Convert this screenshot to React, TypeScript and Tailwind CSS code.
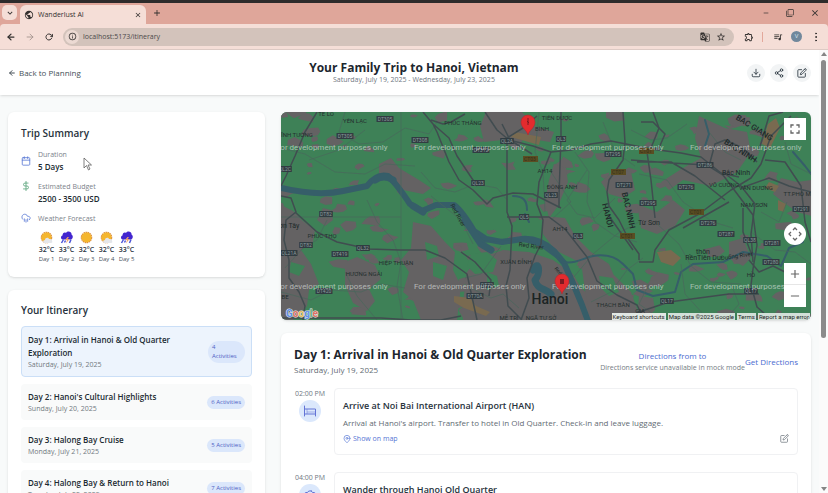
import React, { useState } from 'react';
import {
  FiArrowLeft,
  FiArrowRight,
  FiCalendar,
  FiDollarSign,
  FiDownload,
  FiEdit,
  FiMapPin,
  FiMoreVertical,
  FiRotateCw,
  FiShare2,
} from 'react-icons/fi';
import { LuCamera, LuCloudRain } from 'react-icons/lu';
import {
  MdAdd,
  MdClose,
  MdExpandMore,
  MdFilterNone,
  MdFullscreen,
  MdGTranslate,
  MdInfoOutline,
  MdOutlineExtension,
  MdOutlineQueueMusic,
  MdPublic,
  MdRemove,
  MdStarBorder,
} from 'react-icons/md';

type Weather = 'partly' | 'storm' | 'sunny';

interface Forecast {
  weather: Weather;
  temp: string;
  day: string;
}

interface DayPlan {
  title: string;
  date: string;
  count: number;
}

interface Label {
  x: number;
  y: number;
  text: string;
}

const forecast: Forecast[] = [
  { weather: 'partly', temp: '32°C', day: 'Day 1' },
  { weather: 'storm', temp: '33°C', day: 'Day 2' },
  { weather: 'sunny', temp: '32°C', day: 'Day 3' },
  { weather: 'partly', temp: '32°C', day: 'Day 4' },
  { weather: 'storm', temp: '33°C', day: 'Day 5' },
];

const days: DayPlan[] = [
  { title: 'Day 1: Arrival in Hanoi & Old Quarter Exploration', date: 'Saturday, July 19, 2025', count: 4 },
  { title: "Day 2: Hanoi's Cultural Highlights", date: 'Sunday, July 20, 2025', count: 6 },
  { title: 'Day 3: Halong Bay Cruise', date: 'Monday, July 21, 2025', count: 5 },
  { title: 'Day 4: Halong Bay & Return to Hanoi', date: 'Tuesday, July 22, 2025', count: 7 },
];

const roadShields: Label[] = [
  { x: 104, y: 7, text: 'DT305' },
  { x: 64, y: 24, text: 'DT305' },
  { x: 139, y: 28, text: 'DT308' },
  { x: 4, y: 57, text: 'QL2C' },
  { x: 45, y: 102, text: 'DT82' },
  { x: 25, y: 133, text: 'DT82' },
  { x: 82, y: 136, text: 'QL32' },
  { x: 59, y: 142, text: 'DT419' },
  { x: 8, y: 141, text: 'QL21A' },
  { x: 43, y: 179, text: 'DT420' },
  { x: 226, y: 29, text: 'QL2A' },
  { x: 280, y: 27, text: 'QL3' },
  { x: 200, y: 38, text: 'DT312' },
  { x: 332, y: 42, text: 'DT295' },
  { x: 197, y: 71, text: 'QL23' },
  { x: 270, y: 83, text: 'QL23' },
  { x: 343, y: 73, text: 'DT271' },
  { x: 243, y: 105, text: 'QL5' },
  { x: 297, y: 124, text: 'QL3' },
  { x: 206, y: 173, text: 'DT72' },
  { x: 194, y: 184, text: 'DT70A' },
  { x: 424, y: 53, text: 'DT286' },
  { x: 405, y: 75, text: 'DT276' },
  { x: 367, y: 91, text: 'DT295' },
  { x: 427, y: 111, text: 'DT276' },
  { x: 445, y: 122, text: 'DT287' },
  { x: 469, y: 128, text: 'QL38' },
  { x: 491, y: 131, text: 'DT281' },
  { x: 490, y: 150, text: 'DT280' },
  { x: 520, y: 97, text: 'DT291' },
  { x: 386, y: 189, text: 'QL17' },
  { x: 470, y: 179, text: 'QL17' },
];

const tollShields: Label[] = [
  { x: 249, y: 47, text: 'CT03' },
  { x: 337, y: 60, text: 'CT07' },
  { x: 346, y: 124, text: 'CT01' },
  { x: 365, y: 39, text: 'CT01' },
  { x: 415, y: 100, text: 'CT01' },
];

const districts: Label[] = [
  { x: 45, y: 4, text: 'TE LO' },
  { x: 74, y: 11, text: 'YÊN LẠC' },
  { x: 14, y: 25, text: 'VĨNH TƯỜNG' },
  { x: 182, y: 13, text: 'PHÚC THẮNG' },
  { x: 276, y: 8, text: 'TIÊN DƯỢC' },
  { x: 261, y: 19, text: 'BÌNH' },
  { x: 264, y: 61, text: 'AH14' },
  { x: 281, y: 77, text: 'ĐÔNG ANH' },
  { x: 279, y: 119, text: 'AH14' },
  { x: 41, y: 126, text: 'PHÚC THỌ' },
  { x: 115, y: 153, text: 'HIỆP THUẬN' },
  { x: 83, y: 164, text: 'HƯƠNG NGẢI' },
  { x: 235, y: 152, text: 'XUÂN ĐỈNH' },
  { x: 332, y: 195, text: 'THẠCH BÀN' },
  { x: 228, y: 208, text: 'MỄ TRÌ' },
  { x: 260, y: 208, text: 'NGÃ TƯ SỞ' },
  { x: 443, y: 75, text: 'VÕ CƯỜNG' },
  { x: 475, y: 78, text: 'VĂN DƯƠNG' },
  { x: 473, y: 95, text: 'NAM SƠN' },
  { x: 519, y: 84, text: 'TT.PHỐ MỚI' },
  { x: 470, y: 165, text: 'HỒ' },
  { x: 359, y: 201, text: 'GIA' },
];

const watermarks: [number, number][] = [
  [-5, 38], [133, 38], [271, 38], [409, 38],
  [-5, 177], [133, 177], [271, 177], [409, 177],
];

// Small built-up patches scattered over the fields, from a fixed seed
function buildPatches(count: number): string[] {
  let seed = 11;
  const next = () => {
    seed = (seed * 16807) % 2147483647;
    return seed / 2147483647;
  };
  return Array.from({ length: count }, () => {
    const cx = next() * 530;
    const cy = next() * 208;
    const r = 2 + next() * 6;
    const corners = Array.from({ length: 7 }, (_, i) => {
      const angle = (i / 7) * Math.PI * 2;
      const radius = r * (0.4 + next() * 0.9);
      return `${(cx + Math.cos(angle) * radius * 1.4).toFixed(1)},${(cy + Math.sin(angle) * radius * 0.8).toFixed(1)}`;
    });
    return corners.join(' ');
  });
}

const patches = buildPatches(170);

const WeatherIcon: React.FC<{ weather: Weather }> = ({ weather }) => {
  if (weather === 'storm') {
    return (
      <svg className="h-[13px] w-[13px]" viewBox="0 0 26 26" aria-hidden="true">
        <path d="M5 17c-4-1-4-7 0-8 0-5 4-7 7-5 3-5 12-3 11 3 4 2 3 9-1 10z" fill="#4326cf" />
        <path d="M7 17l-4 7M22 17l-3 7M11 19l-2 4" stroke="#4c55d8" strokeWidth="3" />
        <path d="M15 12l-5 6h4l-2 7 7-9h-4l3-4z" fill="#f0a56b" />
      </svg>
    );
  }
  return (
    <svg className="h-[13px] w-[13px]" viewBox="0 0 26 26" aria-hidden="true">
      <circle cx="13" cy="13" r="10" fill="none" stroke="#d98a3d" strokeWidth="3" strokeDasharray="3 1" />
      <circle cx="13" cy="13" r="10" fill="#f4b62f" />
      {weather === 'partly' && (
        <path d="M10 24c-5 0-5-6 0-6 0-5 7-6 8-2 5-1 7 2 6 4 2 2 0 4-2 4z" fill="#e4e6ea" />
      )}
    </svg>
  );
};

const BedIcon = () => (
  <svg className="h-3.5 w-3.5" viewBox="0 0 28 28" fill="none" stroke="#6374d6" strokeWidth="2" aria-hidden="true">
    <path d="M3 4v20M3 20h22M25 24V10H3" strokeLinecap="round" strokeLinejoin="round" />
    <path d="M8 10v10M8 16h17" strokeWidth="1" />
  </svg>
);

const MapPin: React.FC<{ x: number; y: number; glyph: React.ReactNode }> = ({ x, y, glyph }) => (
  <g transform={`translate(${x} ${y})`}>
    <path d="M0 0C-1-5-7-7-7-13a7 7 0 0 1 14 0C7-7 1-5 0 0z" fill="#e32b2e" stroke="#b3262b" strokeWidth=".5" />
    {glyph}
  </g>
);

const TripMap = () => (
  <svg className="absolute inset-0 h-full w-full" viewBox="0 0 530 208" preserveAspectRatio="xMidYMid slice" role="img" aria-label="Map of Hanoi">
    <rect width="530" height="208" fill="#3e8157" />
    <g fill="#646263">
      {patches.map((points, i) => (
        <polygon key={i} points={points} />
      ))}
    </g>

    {/* Large built-up areas */}
    <g fill="#646263">
      <path d="M0 93l12 6 10 10 12 9-2 12-12 8 10 14 8 20-10 6-2 16-14 14H0z" />
      <path d="M42 96l8 2 2 10-8 6-8-6zM64 150l12-5 18 8 6 14-12 10 6 12-8 10-14-8-8-18zM98 52l12-6 8 10 20 12 12 8-8 6-20-4-12-12-12-2z" />
      <path d="M132 110l18 4 14 16 10 10-2 18 8 16-4 34h-36l-8-20-10-8 6-20-8-12 10-12z" />
      <path d="M182 190l4-30 12-14 24-8 26 2 24 8 20 14 8 14 12 10 18 8 6 14H182z" />
      <path d="M205 0h36l12 14 20 6-4 10-26-4-8 12-14-10-18 2-4-16zM273 52l12 4 2 14-10 24-9 12-4-16 4-22z" />
      <path d="M262 104l22 2 10 18 16 16 18 12 6 14-14 2-22-18-24-12-12-16zM300 150l22 4 12 10 16 16 10 28h-50l-6-30z" />
      <path d="M418 4l26 12 22 4 4 20-14 20-26 14-28-6-14 10-8-8 22-14 18-10-6-20z" />
      <path d="M356 92l20 8 16-12 12 10-10 16-18 8-16-6zM500 66l16 4 14-2v36l-14-4-14-10-10-8zM358 184l14 2 2 12-10 10h-8zM448 130l14-4 8 20-8 8-14-8z" />
      <path d="M320 70l16-14 14 4 4 18-12 8-14-4z" />
    </g>
    <g fill="#3e8157">
      <path d="M190 142l16-2 10 8-4 12-18 2-8-8zM206 160l10 4 2 10-12 4zM318 164l14 2 6 14-10 4-8-8z" />
      <path d="M144 130l12 4 2 10-12 4zM152 150l14 4-4 14-10-4zM10 150l14 4-6 10-10-4z" />
    </g>
    <g fill="#796a50">
      <path d="M234 20l26 5-2 8-28-8zM487 12l8-6 4 10-10 20-8-4zM376 140l14-2 10 8-8 8-12-4zM173 184l16 2 6 8 14 6-4 4-22-8-10-6zM488 70l10 4-4 6-10-4zM497 88l8 4-2 8-6-2z" />
    </g>

    {/* Red River and its side arms */}
    <g fill="none" stroke="#365e69" strokeLinecap="round" strokeLinejoin="round">
      <path d="M0 76c26 6 44 7 62 3l24-5c6-8 13-12 21-10 8 7 14 16 22 28l12 7 14-6 18 0c8 6 14 16 20 26l12 8 16 3 20-3c12-1 22 3 32 12l10 12 8 18 10 24 6 16" strokeWidth="6" />
      <path d="M94 68c6-4 12-4 18 0M132 94l10 6M184 108l16 24 10 6" strokeWidth="7" />
      <path d="M202 130c22-4 42-2 58 4l22 16c14 2 20-4 30-6 12-2 22 0 30 8l10 10 4 16 16 6 22-4 6-20 12-8 30-2 20-10 24 4 14 10 8-18 14-6" strokeWidth="2" />
      <path d="M252 158c6-12 8 4 2 10 2 10 10 8 16 14" strokeWidth="7" />
      <path d="M232 84c10 0 14 4 14 14M244 102l4 8M424 8l4 14-4 12M512 40l12 14 6 8" strokeWidth="2" />
    </g>

    {/* Minor roads */}
    <g fill="none" stroke="#49675b" strokeWidth=".7">
      <path d="M64 0l-6 20 20 12 24-2 22-14 24 6 8-12M0 36l24 6 30 18 30 2 20-10 30 2M28 48l30-10 26-20M120 0v208M0 105h120M46 108l-10 20-14 8-18 20M86 88l10 22 16 18 8 22-4 24 6 34M64 160l12 24 20 24M0 180l30 8 20-10 30 2 20-8 24 4" />
      <path d="M140 60l14 16 20 4 20-8 22 4 10 12M150 84l30 24 12 24M258 0l-4 40 8 20 2 40M294 40l14 20-2 30 8 20 20 14 22 6M306 58l-20 30 10 14 18 4 20-20M322 10l12 30 20 14M350 18l20 10 16-2 20-14M358 62l28 6 16 22 30 20 20 6M376 112l22 20 12 22 20 16 30 2M400 152l4 30 20 22M470 120l24 18 20 2 16 12M428 20l16 20 16 8" />
      <path d="M270 60l20 30-20 18M220 134l-20 28-16 4M190 176l20 10 12-4 16 14M292 166l20-24 24-20 22-12M310 190l20-10 16-22 16-12M368 172l-10 20 20 14M450 172l8 20-14 16M504 30l6 22 20 10M480 100l18 10 8-20" />
    </g>

    {/* Highways */}
    <g fill="none" stroke="#414c50" strokeWidth="1.5" strokeLinejoin="round">
      <path d="M36 0L24 20 14 44 5 64 0 74M0 84l10 2 5 14-10 8-2 20 5 20 0 18 10 14 6 14-2 14M14 100l22 20 20 10 32 7 30 1 26 0 20 8 22 16 10 46" />
      <path d="M142 0l10 12 4 8 12 30 10 18 14 10 14 14 6-6 20-5 20 1 28 14M150 8l12 4 8-2 14-8M152 12l16 14 8 18 20 30" />
      <path d="M204 0l12 18 12 10 24 6 18 6 20-2 20-6 20-3 40 8 30 4 20 4 20 16 18 4" />
      <path d="M226 26v74l5 14-2 44-4 16 2 20 14 14M226 26l16-10 14-12M221 12l8 16 22 14M270 40l-12 30-2 22 6 16-2 24-6 12-8 22 2 20-8 22M280 0v24l-2 60 0 12M226 105h42l16 12 22 28 10 24 20 14 20 10 8 16" />
      <path d="M342 0l2 30-2 18-14 20-2 12 2 14 10 14 10 20 10 14 0 6" />
      <path d="M328 104l24 34M366 40l4 28 4 38M356 50l34 0 24 14 30 24M360 10l12 0 12 12-6 14-20 2M358 150l14 0 2-12 14-20 30-16 32-24 20-12 10-14 10-28 20-20M350 48l40 3 36 2 16 10 30 40 4 30-4 24-2 16 6 22 20 18" />
      <path d="M442 60l18 14 14 18-4 30 2 28M462 96v24l10 26M460 76l28-10 20 8 22 6M484 48l20 2 16 24 4 36 6 20M358 200l30-10 30-4 30-4h30M468 148l10 12 14-6 20 10M428 54l6-22 10-4 18 8 14 14M0 206h100l30 2h30l20-4" />
      <path d="M372 0l6 16-8 20M448 90l-46 26M180 140l14 10 16 18-2 16M478 38l10-34 14-4" />
    </g>

    {/* Road shields */}
    <g fontFamily="Roboto, sans-serif" fontSize="5" textAnchor="middle">
      {roadShields.map((s, i) => (
        <g key={i}>
          <rect x={s.x - s.text.length * 1.7} y={s.y - 3} width={s.text.length * 3.4} height="6" rx=".5" fill="#313c42" />
          <text x={s.x} y={s.y + 2} fill="#8c9a9b">{s.text}</text>
        </g>
      ))}
      {tollShields.map((s, i) => (
        <g key={i}>
          <rect x={s.x - 7} y={s.y - 3} width="15" height="6" fill="#5a4d22" />
          <text x={s.x} y={s.y + 2} fill="#332e1c">{s.text}</text>
        </g>
      ))}
    </g>

    {/* Place names */}
    <g fontFamily="Roboto, sans-serif" fontSize="6" textAnchor="middle" fill="#25302f">
      {districts.map(d => (
        <text key={`${d.text}-${d.x}`} x={d.x} y={d.y}>{d.text}</text>
      ))}
    </g>
    <g fontFamily="Roboto, sans-serif" fontSize="7" textAnchor="middle" fill="#202a2a">
      <text x="6" y="116">Sơn Tây</text>
      <text x="4" y="187" fontSize="6">BE</text>
      <text x="455" y="63">Bắc Ninh</text>
      <text x="368" y="113">Từ Sơn</text>
      <text x="422" y="142">thôn</text>
      <text x="422" y="148">RềnTiên Du</text>
      <text x="456" y="146" fontSize="6" transform="rotate(-8 456 146)">Đuống River</text>
      <text x="250" y="136" fontSize="6" transform="rotate(8 250 136)">Red River</text>
      <text x="175" y="104" fontSize="6" transform="rotate(62 175 104)">Red River</text>
      <text x="276" y="160" fontSize="5" transform="rotate(50 276 160)">Red</text>
      <g fontSize="8" fontWeight="500">
        <text x="324" y="104" transform="rotate(76 324 104)">HANOI</text>
        <text x="345" y="99" transform="rotate(77 345 99)">BAC NINH</text>
        <text x="472" y="18" transform="rotate(32 472 18)">BAC GIANG</text>
        <text x="458" y="41" transform="rotate(32 458 41)">BAC NINH</text>
      </g>
      <text x="269" y="192" fontSize="14" fontWeight="500" fill="#1b2424">Hanoi</text>
    </g>

    <g fontFamily="Roboto, sans-serif" fontSize="8" fill="#e6ece8" fillOpacity=".62">
      {watermarks.map(([x, y]) => (
        <text key={`${x}-${y}`} x={x} y={y}>For development purposes only</text>
      ))}
    </g>

    <MapPin x={247} y={23} glyph={<path d="M0-17v7M-1-14l2 2" stroke="#7d1a20" />} />
    <MapPin x={281} y={182} glyph={<path d="M-2-15h4v5h-4z" fill="#7d1a20" />} />

    <text x="5" y="205" fontFamily="Roboto, sans-serif" fontSize="10" fontWeight="700" stroke="#e8ecef" strokeWidth="1" paintOrder="stroke">
      <tspan fill="#5f8fe6">G</tspan>
      <tspan fill="#dd6f62">o</tspan>
      <tspan fill="#e5bd55">o</tspan>
      <tspan fill="#5f8fe6">g</tspan>
      <tspan fill="#63a877">l</tspan>
      <tspan fill="#dd6f62">e</tspan>
    </text>
  </svg>
);

const BrowserChrome = () => (
  <div className="shrink-0 border-t-[3px] border-[#2d2b2b] bg-[#dfa69a] text-[#33302f]">
    <div className="flex h-[21px] items-end pl-0.5">
      <button aria-label="Search tabs" className="mb-1 mr-[3px] flex h-[15px] w-[15px] items-center justify-center rounded-[5px] bg-[#f5ded7]">
        <MdExpandMore className="h-2.5 w-2.5" />
      </button>
      <div className="flex h-[19px] w-[126px] items-center rounded-t-md bg-[#f5ded7] px-1">
        <MdPublic className="h-2.5 w-2.5 shrink-0" />
        <span className="ml-1 flex-1 text-[7px] leading-3">Wanderlust AI</span>
        <button aria-label="Close tab"><MdClose className="h-2 w-2" /></button>
      </div>
      <button aria-label="New tab" className="mb-1.5 ml-1.5"><MdAdd className="h-2.5 w-2.5" /></button>
      <div className="mb-1.5 ml-auto flex items-center gap-4 pr-2">
        <button aria-label="Minimize"><MdRemove className="h-2 w-2" /></button>
        <button aria-label="Restore"><MdFilterNone className="h-2 w-2" /></button>
        <button aria-label="Close window"><MdClose className="h-2.5 w-2.5" /></button>
      </div>
    </div>
    <div className="flex h-[26px] items-center rounded-t border-b border-[#ddcac4] bg-[#f5ded7] px-1.5">
      <button aria-label="Back"><FiArrowLeft className="h-2.5 w-2.5" strokeWidth={3} /></button>
      <button aria-label="Forward" className="ml-[9px] text-[#9f8f8a]"><FiArrowRight className="h-2.5 w-2.5" /></button>
      <button aria-label="Reload" className="ml-2.5"><FiRotateCw className="h-2 w-2" strokeWidth={3} /></button>
      <div className="ml-2.5 flex h-[18px] flex-1 items-center gap-1 rounded-full bg-[#d3c3bb] pl-0.5 pr-2">
        <span className="flex h-[14px] w-[14px] items-center justify-center rounded-full bg-[#ecdad3]">
          <MdInfoOutline className="h-[9px] w-[9px]" />
        </span>
        <input
          aria-label="Address"
          defaultValue="localhost:5173/itinerary"
          className="min-w-0 flex-1 bg-transparent text-[7px] leading-3 text-[#4b4a4a] outline-none"
        />
        <MdGTranslate className="mr-0.5 h-2.5 w-2.5" />
        <MdStarBorder className="h-2.5 w-2.5" />
      </div>
      <MdOutlineExtension className="ml-2.5 h-2.5 w-2.5" />
      <span className="ml-2 h-2.5 w-px bg-[#e3a89b]" />
      <MdOutlineQueueMusic className="ml-2.5 h-2.5 w-2.5" />
      <span className="ml-2 flex h-[11px] w-[11px] items-center justify-center rounded-full bg-[#71889c] text-[6px] text-[#dce8f5]">V</span>
      <button aria-label="Menu" className="ml-2"><FiMoreVertical className="h-3 w-3" strokeWidth={2} /></button>
    </div>
  </div>
);

const TripSummary = () => (
  <section className="rounded-md bg-white p-[13px] pt-3.5 shadow">
    <h2 className="mb-[9px] text-[10px] font-semibold leading-[14px] text-[#27323c]">Trip Summary</h2>
    <div className="space-y-2 text-[7px] leading-[11px] text-[#7b828a]">
      <div className="flex items-center">
        <FiCalendar className="mr-[7px] h-2.5 w-2.5 text-[#5b7bd5]" />
        <div>
          <p>Duration</p>
          <p className="text-[8px] font-semibold leading-[13px] text-[#202a31]">5 Days</p>
        </div>
      </div>
      <div className="flex">
        <FiDollarSign className="mr-[7px] h-2.5 w-2.5 text-[#5aa37b]" />
        <div>
          <p>Estimated Budget</p>
          <p className="text-[8px] font-semibold leading-[13px] text-[#202a31]">2500 - 3500 USD</p>
        </div>
      </div>
      <div className="flex">
        <LuCloudRain className="mr-[7px] h-2.5 w-2.5 text-[#5b7bd5]" />
        <div>
          <p className="mb-[7px]">Weather Forecast</p>
          <div className="flex gap-[3px]">
            {forecast.map(f => (
              <div key={f.day} className="flex w-[17px] flex-col items-center whitespace-nowrap">
                <WeatherIcon weather={f.weather} />
                <span className="text-[7px] font-semibold leading-[11px] text-[#27323c]">{f.temp}</span>
                <span className="text-[6px] leading-[9px] text-[#47515a]">{f.day}</span>
              </div>
            ))}
          </div>
        </div>
      </div>
    </div>
  </section>
);

interface ItineraryListProps {
  selected: number;
  onSelect: (index: number) => void;
}

const ItineraryList: React.FC<ItineraryListProps> = ({ selected, onSelect }) => (
  <section className="rounded-md bg-white p-[13px] shadow">
    <h2 className="mb-2 text-[10px] font-semibold leading-[15px] text-[#27323c]">Your Itinerary</h2>
    <div className="space-y-[7px]">
      {days.map((day, i) => (
        <button
          key={day.title}
          onClick={() => onSelect(i)}
          className={`flex w-full items-center justify-between rounded border px-1.5 text-left ${
            i === selected ? 'border-[#cbdff7] bg-[#edf4fd] py-1.5' : 'border-transparent bg-[#f9fafa] py-[5px]'
          }`}
        >
          <div className="pr-7">
            <p className="text-[8px] font-semibold leading-[13px] text-[#202a31]">{day.title}</p>
            <p className="text-[7px] leading-[11px] text-[#717980]">{day.date}</p>
          </div>
          <span
            className={`rounded-full bg-[#dbe7fb] px-1 py-0.5 text-[6px] leading-[9px] text-[#4f61c4] ${
              i === selected ? 'w-[37px] shrink-0' : 'whitespace-nowrap'
            }`}
          >
            {day.count} Activities
          </span>
        </button>
      ))}
    </div>
  </section>
);

interface ActivityProps {
  time: string;
  icon: React.ReactNode;
  title: string;
  description: string;
}

const Activity: React.FC<ActivityProps> = ({ time, icon, title, description }) => (
  <div className="flex">
    <div className="mr-2 flex w-8 shrink-0 flex-col items-center">
      <span className="whitespace-nowrap text-[7px] leading-[11px] text-[#6f777f]">{time}</span>
      <span className="mt-px flex h-[22px] w-[22px] items-center justify-center rounded-full bg-[#dbe8fc]">{icon}</span>
    </div>
    <div className="flex-1 rounded border border-[#f0f1f3] px-2 py-2.5">
      <h3 className="text-[9px] font-semibold leading-[14px] text-[#27323c]">{title}</h3>
      <p className="mt-1 text-[8px] leading-[12px] text-[#626b73]">{description}</p>
      <div className="mt-1 flex items-center justify-between">
        <button className="flex items-center gap-0.5 text-[7px] leading-[11px] text-[#5575d4]">
          <FiMapPin className="h-2 w-2" />
          Show on map
        </button>
        <button aria-label="Edit activity" className="text-[#6f777f]"><FiEdit className="h-[9px] w-[9px]" /></button>
      </div>
    </div>
  </div>
);

const DayDetails = () => (
  <section className="rounded-md bg-white p-[13px] shadow">
    <div className="mb-3 flex items-center justify-between whitespace-nowrap">
      <div>
        <h2 className="text-[12px] font-bold leading-[18px] text-[#1c262e]">Day 1: Arrival in Hanoi &amp; Old Quarter Exploration</h2>
        <p className="text-[8px] leading-[12px] text-[#626b73]">Saturday, July 19, 2025</p>
      </div>
      <div className="flex items-center">
        <div className="text-center">
          <a href="#directions" className="block text-[8px] leading-[13px] text-[#4a6bd0]">Directions from to</a>
          <p className="text-[7px] leading-[11px] text-[#757c83]">Directions service unavailable in mock mode</p>
        </div>
        <a href="#get-directions" className="text-[8px] leading-[13px] text-[#4a6bd0]">Get Directions</a>
      </div>
    </div>
    <div className="space-y-[17px]">
      <Activity
        time="02:00 PM"
        icon={<BedIcon />}
        title="Arrive at Noi Bai International Airport (HAN)"
        description="Arrival at Hanoi's airport. Transfer to hotel in Old Quarter. Check-in and leave luggage."
      />
      <Activity
        time="04:00 PM"
        icon={<LuCamera className="h-3 w-3 text-[#6374d6]" />}
        title="Wander through Hanoi Old Quarter"
        description="Explore the lively streets and markets of the Old Quarter."
      />
    </div>
  </section>
);

const MapPanel = () => (
  <div className="relative h-[208px] overflow-hidden rounded-md shadow">
    <TripMap />
    <button aria-label="Toggle fullscreen" className="absolute right-[5px] top-[6px] flex h-[22px] w-[22px] items-center justify-center bg-white text-[#666]">
      <MdFullscreen className="h-4 w-4" />
    </button>
    <button aria-label="Map camera controls" className="absolute bottom-[75px] right-[5px] flex h-[22px] w-[22px] items-center justify-center rounded-full bg-white">
      <svg className="h-3.5 w-3.5" viewBox="0 0 28 28" fill="none" stroke="#666" strokeWidth="2.5" aria-hidden="true">
        <path d="M10 6l4-4 4 4M10 22l4 4 4-4M6 10l-4 4 4 4M22 10l4 4-4 4" />
      </svg>
    </button>
    <div className="absolute bottom-[13px] right-[5px] flex w-[22px] flex-col divide-y divide-[#e6e6e6] bg-white text-[#666]">
      <button aria-label="Zoom in" className="flex h-[22px] items-center justify-center"><MdAdd className="h-3.5 w-3.5" /></button>
      <button aria-label="Zoom out" className="flex h-[22px] items-center justify-center"><MdRemove className="h-3.5 w-3.5" /></button>
    </div>
    <div className="absolute bottom-0 right-0 flex gap-0.5 whitespace-nowrap pr-px font-[Roboto,sans-serif] text-[6px] leading-[7px] text-[#222]">
      <button className="bg-[#e2e8e4] px-px">Keyboard shortcuts</button>
      <span className="bg-[#d3e0d8] px-px">Map data ©2025 Google</span>
      <a href="#terms" className="bg-[#d3e0d8] px-px">Terms</a>
      <a href="#report" className="bg-[#d3e0d8] px-px">Report a map error</a>
    </div>
  </div>
);

export default function App() {
  const [selected, setSelected] = useState(0);

  return (
    <div className="relative flex h-screen flex-col overflow-hidden bg-[#f8fafa] font-['Open_Sans','Noto_Sans',sans-serif]">
      <BrowserChrome />
      <div className="flex min-h-0 flex-1">
        <div className="min-w-0 flex-1 overflow-hidden">
          <header className="flex items-center justify-between bg-white px-2 pb-2.5 pt-2.5 shadow">
            <button className="flex items-center gap-[3px] text-[8px] leading-[13px] text-[#454f57]">
              <FiArrowLeft className="h-2 w-2" strokeWidth={3} />
              Back to Planning
            </button>
            <div className="text-center">
              <h1 className="text-[12px] font-bold leading-[15px] text-[#1c262e]">Your Family Trip to Hanoi, Vietnam</h1>
              <p className="text-[7px] leading-[10px] text-[#6f777f]">Saturday, July 19, 2025 - Wednesday, July 23, 2025</p>
            </div>
            <div className="flex gap-[5px] text-[#27323c]">
              <button aria-label="Download" className="flex h-[18px] w-[18px] items-center justify-center rounded-full bg-[#f2f4f5]"><FiDownload className="h-2.5 w-2.5" /></button>
              <button aria-label="Share" className="flex h-[18px] w-[18px] items-center justify-center rounded-full bg-[#f2f4f5]"><FiShare2 className="h-2.5 w-2.5" /></button>
              <button aria-label="Edit" className="flex h-[18px] w-[18px] items-center justify-center rounded-full bg-[#f2f4f5]"><FiEdit className="h-2.5 w-2.5" /></button>
            </div>
          </header>
          <main className="grid grid-cols-3 gap-4 px-2 pt-[17px]">
            <div className="space-y-[13px]">
              <TripSummary />
              <ItineraryList selected={selected} onSelect={setSelected} />
            </div>
            <div className="col-span-2 space-y-[13px]">
              <MapPanel />
              <DayDetails />
            </div>
          </main>
        </div>
        <div className="flex w-[9px] shrink-0 flex-col items-center bg-[#fbfbfb] py-0.5" aria-hidden="true">
          <span className="h-0 w-0 border-x-[3px] border-b-[4px] border-x-transparent border-b-[#858585]" />
          <span className="mt-1 w-[5px] flex-[277] rounded-full bg-[#8b8b8b]" />
          <span className="flex-[148]" />
          <span className="h-0 w-0 border-x-[3px] border-t-[4px] border-x-transparent border-t-[#858585]" />
        </div>
      </div>
      {/* Mouse pointer */}
      <svg className="pointer-events-none absolute left-[83px] top-[157px] h-3.5 w-2.5" viewBox="0 0 20 28" aria-hidden="true">
        <path d="M2 2v20l5-5 4 9 3-2-4-8h7z" fill="#fff" stroke="#555" strokeWidth="1.5" />
      </svg>
    </div>
  );
}
